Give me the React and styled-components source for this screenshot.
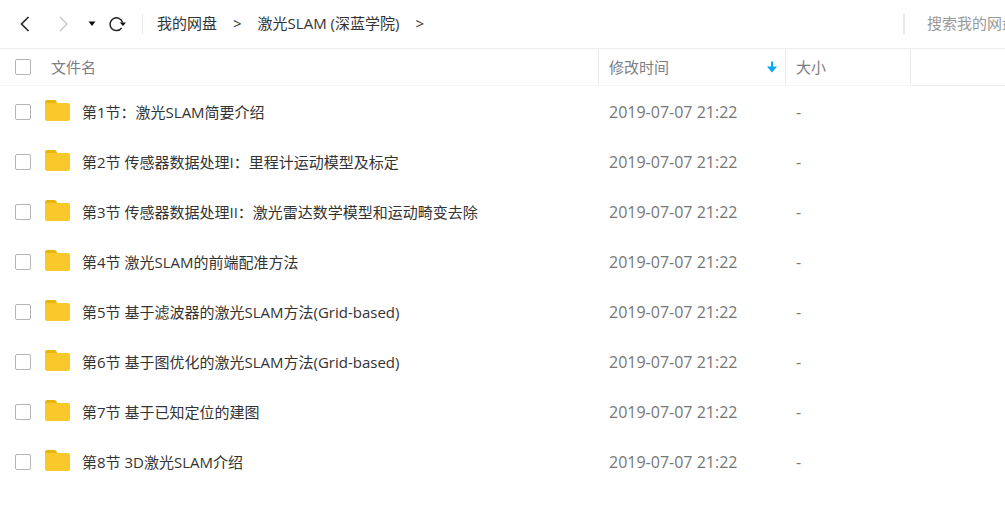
import React, { useState } from 'react';
import styled, { createGlobalStyle } from 'styled-components';

const GlobalStyle = createGlobalStyle`
  * {
    box-sizing: border-box;
  }

  body {
    margin: 0;
    background: #fff;
    color: #333;
    font-family: 'Open Sans', 'Noto Sans CJK SC', sans-serif;
    font-size: 15px;
    line-height: 20px;
    overflow-x: hidden;
  }
`;

const Toolbar = styled.header`
  display: flex;
  align-items: center;
  height: 49px;
  padding-left: 15px;
  border-bottom: 1px solid #eee;
`;

const IconButton = styled.button`
  display: flex;
  align-items: center;
  justify-content: center;
  flex: none;
  width: ${({ $width }) => $width}px;
  height: 20px;
  padding: 0;
  border: none;
  background: none;
  color: ${({ disabled }) => (disabled ? '#c4c4c4' : '#222')};
`;

const NavButtons = styled.div`
  display: flex;
  align-items: center;
  gap: 8px;
`;

const Divider = styled.span`
  flex: none;
  width: ${({ $width }) => $width}px;
  height: 20px;
  margin-left: 12px;
  background: #e9e9e9;
`;

const Breadcrumb = styled.nav`
  display: flex;
  flex: 1;
  align-items: center;
  gap: 16px;
  min-width: 0;
  padding: 0 0 2px 14px;
  white-space: nowrap;
`;

const Crumb = styled.a`
  color: #333;
  text-decoration: none;
`;

const SearchInput = styled.input`
  width: 78px;
  height: 24px;
  margin-left: 22px;
  padding: 0 0 2px;
  border: none;
  outline: none;
  background: none;
  font: inherit;

  &::placeholder {
    color: #999;
    opacity: 1;
  }
`;

const FileTable = styled.table`
  width: 100%;
  table-layout: fixed;
  border-collapse: separate;
  border-spacing: 0;
`;

const Col = styled.col`
  width: ${({ $width }) => $width}px;
`;

const HeadCell = styled.th`
  height: 37px;
  padding: 0 0 0 ${({ $first }) => ($first ? 15 : 10)}px;
  border-left: ${({ $first }) => ($first ? 'none' : '1px solid #ebebeb')};
  border-bottom: 1px solid ${({ $last }) => ($last ? '#eeeef6' : '#f6f6f6')};
  color: #7d7d82;
  font-weight: 400;
  text-align: left;
`;

const SortLabel = styled.div`
  display: flex;
  align-items: center;
  justify-content: space-between;
  padding-right: 7px;
`;

const Cell = styled.td`
  height: 50px;
  padding: 2px 0 0 ${({ $first }) => ($first ? 15 : 11)}px;
  color: #777;
  font-size: ${({ $first }) => ($first ? 15 : 16)}px;
  white-space: nowrap;
`;

const NameLine = styled.div`
  display: flex;
  align-items: center;
`;

const Checkbox = styled.input`
  appearance: none;
  flex: none;
  width: 16px;
  height: 16px;
  margin: 0;
  border: 1px solid #b4b4b4;
  border-radius: 2px;
  background: #fff;

  &:checked {
    background: #06a7ff;
  }
`;

const HeadLabel = styled.label`
  padding-left: 20px;
`;

const FileLabel = styled.label`
  display: flex;
  align-items: center;
  gap: 12px;
  padding-left: 13px;
  color: #333;
`;

const Folder = () => (
  <svg width="26" height="24" viewBox="0 0 26 24" aria-hidden="true">
    <path d="M1 8V2.2Q1 0 3.2 0H10.5Q11.5 0 12.2 1L14 4V8Z" fill="#e8b50c" />
    <path d="M1 3H24Q26 3 26 5V19Q26 21 24 21H3Q1 21 1 19Z" fill="#f9c92c" />
  </svg>
);

const files = [
  '第1节：激光SLAM简要介绍',
  '第2节 传感器数据处理I：里程计运动模型及标定',
  '第3节 传感器数据处理II：激光雷达数学模型和运动畸变去除',
  '第4节 激光SLAM的前端配准方法',
  '第5节 基于滤波器的激光SLAM方法(Grid-based)',
  '第6节 基于图优化的激光SLAM方法(Grid-based)',
  '第7节 基于已知定位的建图',
  '第8节 3D激光SLAM介绍',
].map((name, index) => ({ id: `file-${index + 1}`, name, time: '2019-07-07 21:22', size: '-' }));

const App = () => {
  const [selected, setSelected] = useState([]);

  const toggle = (id) => {
    setSelected((prev) => (prev.includes(id) ? prev.filter((item) => item !== id) : [...prev, id]));
  };

  const toggleAll = () => {
    setSelected((prev) => (prev.length === files.length ? [] : files.map((file) => file.id)));
  };

  return (
    <>
      <GlobalStyle />
      <Toolbar>
        <NavButtons>
          <IconButton type="button" $width={20} aria-label="后退">
            <svg width="18" height="18" viewBox="0 0 18 18" fill="none" stroke="currentColor" strokeWidth="1.6">
              <path d="M12.5 2L5.5 9L12.5 16" />
            </svg>
          </IconButton>
          <IconButton type="button" $width={37} disabled aria-label="前进">
            <svg width="18" height="18" viewBox="0 0 18 18" fill="none" stroke="currentColor" strokeWidth="1.4">
              <path d="M7 2L14 9L7 16" />
            </svg>
          </IconButton>
          <IconButton type="button" $width={8} aria-label="历史记录">
            <svg width="8" height="6" viewBox="0 0 8 6" fill="#111">
              <path d="M0.5 0.5H7.5L4 5Z" />
            </svg>
          </IconButton>
          <IconButton type="button" $width={26} aria-label="刷新">
            <svg width="20" height="18" viewBox="0 0 20 18" fill="none">
              <path d="M14.6 13A6.4 6.4 0 1 1 15.6 7.5" stroke="#222" strokeWidth="1.5" />
              <path d="M12.8 7.5H19L16 11Z" fill="#111" />
            </svg>
          </IconButton>
        </NavButtons>
        <Divider $width={1} />
        <Breadcrumb>
          <Crumb href="#root">我的网盘</Crumb>
          <span>&gt;</span>
          <Crumb href="#slam">激光SLAM (深蓝学院)</Crumb>
          <span>&gt;</span>
        </Breadcrumb>
        <Divider $width={2} />
        <SearchInput type="text" placeholder="搜索我的网盘" aria-label="搜索我的网盘" />
      </Toolbar>

      <FileTable>
        <colgroup>
          <col />
          <Col $width={187} />
          <Col $width={125} />
          <Col $width={95} />
        </colgroup>
        <thead>
          <tr>
            <HeadCell $first>
              <NameLine>
                <Checkbox
                  id="select-all"
                  type="checkbox"
                  checked={selected.length === files.length}
                  onChange={toggleAll}
                />
                <HeadLabel htmlFor="select-all">文件名</HeadLabel>
              </NameLine>
            </HeadCell>
            <HeadCell>
              <SortLabel>
                修改时间
                <svg width="12" height="14" viewBox="0 0 12 14" aria-hidden="true">
                  <path d="M5 1.5H7V6.5H11L6 12.5L1 6.5H5Z" fill="#06a7ff" />
                </svg>
              </SortLabel>
            </HeadCell>
            <HeadCell>大小</HeadCell>
            <HeadCell $last />
          </tr>
        </thead>
        <tbody>
          {files.map((file) => (
            <tr key={file.id}>
              <Cell $first>
                <NameLine>
                  <Checkbox
                    id={file.id}
                    type="checkbox"
                    checked={selected.includes(file.id)}
                    onChange={() => toggle(file.id)}
                  />
                  <FileLabel htmlFor={file.id}>
                    <Folder />
                    {file.name}
                  </FileLabel>
                </NameLine>
              </Cell>
              <Cell>{file.time}</Cell>
              <Cell>{file.size}</Cell>
              <Cell />
            </tr>
          ))}
        </tbody>
      </FileTable>
    </>
  );
};

export default App;
